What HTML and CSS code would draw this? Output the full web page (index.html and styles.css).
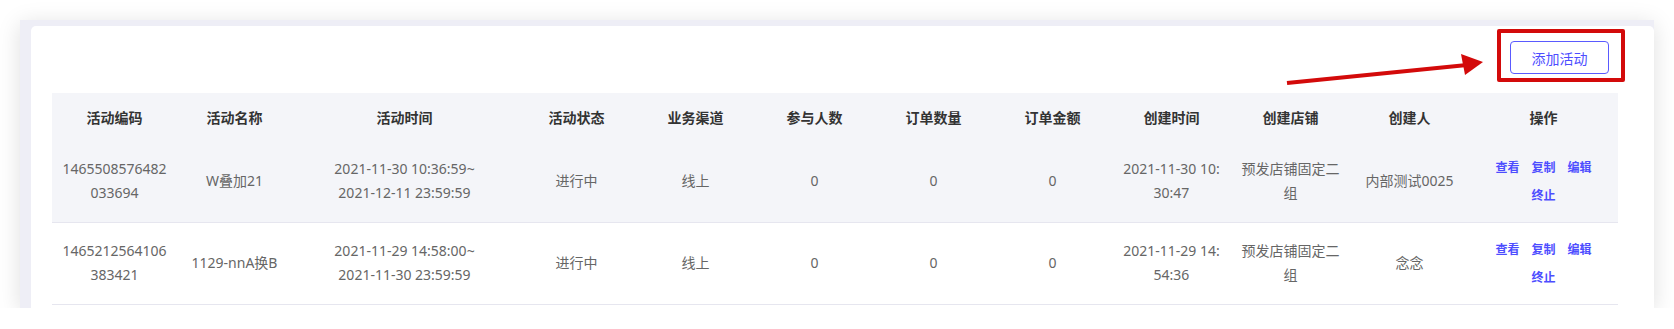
FILE: index.html
```html
<!DOCTYPE html>
<html lang="zh-CN">
<head>
    <meta charset="UTF-8">
    <meta name="viewport" content="width=device-width, initial-scale=1.0">
    <title>活动列表</title>
    <link rel="stylesheet" href="styles.css">
</head>
<body>
    <div class="window">
        <div class="card">
            <div class="toolbar">
                <button class="btn-add">添加活动</button>
            </div>

            <table class="activity-table">
                <colgroup>
                    <col style="width: 125px">
                    <col style="width: 115px">
                    <col style="width: 225px">
                    <col style="width: 119px">
                    <col style="width: 119px">
                    <col style="width: 119px">
                    <col style="width: 119px">
                    <col style="width: 119px">
                    <col style="width: 119px">
                    <col style="width: 119px">
                    <col style="width: 119px">
                    <col>
                </colgroup>
                <thead>
                    <tr>
                        <th>活动编码</th>
                        <th>活动名称</th>
                        <th>活动时间</th>
                        <th>活动状态</th>
                        <th>业务渠道</th>
                        <th>参与人数</th>
                        <th>订单数量</th>
                        <th>订单金额</th>
                        <th>创建时间</th>
                        <th>创建店铺</th>
                        <th>创建人</th>
                        <th>操作</th>
                    </tr>
                </thead>
                <tbody>
                    <tr class="row-hover">
                        <td class="break">1465508576482033694</td>
                        <td>W叠加21</td>
                        <td>
                            <div>2021-11-30 10:36:59~</div>
                            <div>2021-12-11 23:59:59</div>
                        </td>
                        <td>进行中</td>
                        <td>线上</td>
                        <td>0</td>
                        <td>0</td>
                        <td>0</td>
                        <td class="break">2021-11-30 10:30:47</td>
                        <td>预发店铺固定二组</td>
                        <td>内部测试0025</td>
                        <td class="ops">
                            <a>查看</a><a>复制</a><a>编辑</a><a>终止</a>
                        </td>
                    </tr>
                    <tr>
                        <td class="break">1465212564106383421</td>
                        <td>1129-nnA换B</td>
                        <td>
                            <div>2021-11-29 14:58:00~</div>
                            <div>2021-11-30 23:59:59</div>
                        </td>
                        <td>进行中</td>
                        <td>线上</td>
                        <td>0</td>
                        <td>0</td>
                        <td>0</td>
                        <td class="break">2021-11-29 14:54:36</td>
                        <td>预发店铺固定二组</td>
                        <td>念念</td>
                        <td class="ops">
                            <a>查看</a><a>复制</a><a>编辑</a><a>终止</a>
                        </td>
                    </tr>
                </tbody>
            </table>
        </div>
    </div>

    <!-- annotation overlay -->
    <div class="mark-box"></div>
    <svg class="mark-arrow" width="220" height="40" viewBox="0 0 220 40">
        <line x1="2" y1="32" x2="182" y2="14" stroke="#d30a0a" stroke-width="4" />
        <polygon points="198,11 176,3 180,24" fill="#d30a0a" />
    </svg>
</body>
</html>
```

FILE: styles.css
```css
:root {
    --frame-bg: #eeeef6;
    --head-bg: #f4f5f9;
    --line: #e6e6ef;
    --link: #4d4dff;
    --mark-red: #d30a0a;
}

* {
    margin: 0;
    padding: 0;
    box-sizing: border-box;
}

body {
    font-family: "Noto Sans", "Noto Sans CJK SC", sans-serif;
    background: #fff;
    color: #666;
    font-size: 14px;
    overflow: hidden;
}

.window {
    width: 1634px;
    height: 288px;
    margin: 20px 0 0 20px;
    padding: 6px 0 0 11px;
    background: var(--frame-bg);
    box-shadow: 0 4px 22px rgba(0, 0, 0, 0.13);
}

.card {
    height: 100%;
    background: #fff;
    border-radius: 5px 5px 0 0;
    padding: 15px 36px 0 21px;
}

.toolbar {
    display: flex;
    justify-content: flex-end;
    padding-right: 9px;
    margin-bottom: 19px;
}

.btn-add {
    width: 99px;
    height: 33px;
    border: 1px solid #5a5aff;
    border-radius: 4px;
    background: #fff;
    color: var(--link);
    font-family: inherit;
    font-size: 14px;
}

.activity-table {
    width: 1566px;
    border-collapse: collapse;
    table-layout: fixed;
}

.activity-table th {
    height: 47px;
    padding: 0 10px;
    background: var(--head-bg);
    color: #333;
    font-weight: 600;
    text-align: center;
}

.activity-table td {
    height: 82px;
    padding: 0 10px;
    line-height: 24px;
    text-align: center;
    vertical-align: middle;
    border-bottom: 1px solid var(--line);
}

.row-hover td {
    background: var(--head-bg);
}

.break {
    word-break: break-all;
}

.activity-table .ops {
    line-height: 28px;
}

.ops a {
    display: inline-block;
    margin: 0 6px;
    color: var(--link);
    font-family: "Noto Sans CJK SC", sans-serif;
    font-size: 12px;
    font-weight: 600;
}

/* annotation */
.mark-box {
    position: absolute;
    left: 1497px;
    top: 29px;
    width: 128px;
    height: 53px;
    border: 4px solid var(--mark-red);
    border-radius: 2px;
}

.mark-arrow {
    position: absolute;
    left: 1285px;
    top: 51px;
}
```
